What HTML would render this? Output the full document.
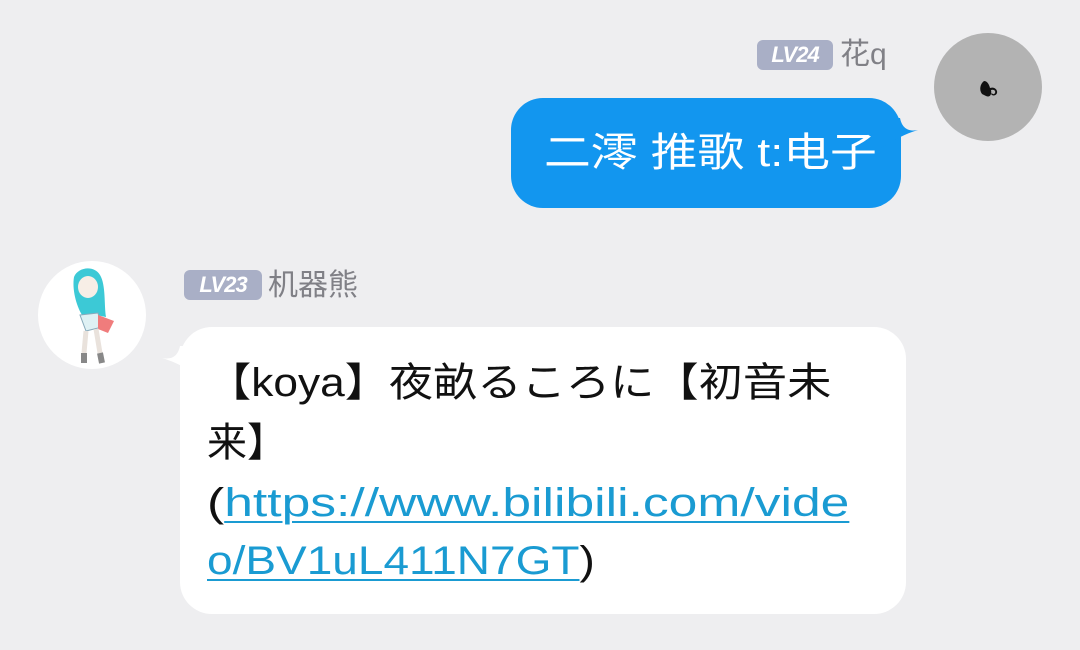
<!DOCTYPE html>
<html><head><meta charset="utf-8"><style>
body{margin:0;width:1080px;height:650px;background:#eeeef0;position:relative;overflow:hidden;font-family:"Liberation Sans","Noto Sans CJK SC",sans-serif;}
.a{position:absolute;}
.badge{background:#a9afc6;color:#fff;font-weight:bold;font-style:italic;font-size:22px;border-radius:6px;height:30px;line-height:30px;text-align:center;letter-spacing:-1px}
.name{color:#808086;font-size:30px;line-height:30px}
.ln{position:absolute;left:207px;font-size:40px;color:#111;white-space:nowrap;line-height:44px;transform-origin:0 50%}
.lk{color:#1a9bd2;text-decoration:underline;text-decoration-thickness:2px;text-underline-offset:5px}
</style></head><body>
<div class="a badge" style="left:757px;top:40px;width:76px">LV24</div>
<div class="a name" style="left:840px;top:40px">花q</div>
<div class="a" style="left:934px;top:33px;width:108px;height:108px;border-radius:50%;background:#b3b3b3"></div>
<svg class="a" style="left:976px;top:76px" width="26" height="26" viewBox="0 0 26 26"><path d="M8 5 C4 8 3 14 6 18 L10 20 C14 22 16 18 15 14 C18 13 20 15 19 17 C18 19 16 18 16 17 L15 18 C17 21 22 19 21 15 C20 12 17 11 14 12 C13 8 11 5 8 5Z" fill="#111"/></svg>
<div class="a" style="left:511px;top:98px;width:390px;height:110px;border-radius:32px;background:#1296ef"></div>
<svg class="a" style="left:880px;top:118px" width="40" height="40" viewBox="0 0 40 40"><path d="M0 0 L0 30 C10 26 18 18 38 12 C28 14 22 10 20 0Z" fill="#1296ef"/></svg>
<div class="a" style="left:544px;top:131px;color:#fff;font-size:40px;line-height:44px;white-space:nowrap;transform:scaleX(1.17);transform-origin:0 50%">二澪 推歌 t:电子</div>

<div class="a" style="left:38px;top:261px;width:108px;height:108px;border-radius:50%;background:#fff"></div>
<svg class="a" style="left:62px;top:265px" width="64" height="102" viewBox="0 0 64 102">
<path d="M12 12 C16 2 32 0 38 10 C44 20 42 40 44 52 L34 50 L20 50 C14 40 10 24 12 12Z" fill="#3cc9d6"/>
<ellipse cx="26" cy="22" rx="10" ry="11" fill="#f7eee6"/>
<path d="M18 50 L36 48 L40 62 L24 66Z" fill="#dff1f4" stroke="#8ab" stroke-width="1"/>
<path d="M36 50 L52 56 L46 68 L36 64Z" fill="#f07c7c"/>
<path d="M24 66 L22 88 M34 64 L38 88" stroke="#e9e2dc" stroke-width="5"/>
<path d="M22 88 L22 98 M38 88 L40 98" stroke="#888" stroke-width="6"/>
</svg>
<div class="a badge" style="left:184px;top:270px;width:78px">LV23</div>
<div class="a name" style="left:268px;top:271px">机器熊</div>
<div class="a" style="left:180px;top:327px;width:726px;height:287px;border-radius:32px;background:#fff"></div>
<svg class="a" style="left:160px;top:346px" width="40" height="40" viewBox="0 0 40 40"><path d="M40 0 L40 30 C30 26 22 18 2 12 C12 14 18 10 20 0Z" fill="#fff"/></svg>
<div class="ln" style="top:361px;transform:scaleX(1.106)">【koya】夜畝るころに【初音未</div>
<div class="ln" style="top:421px">来】</div>
<div class="ln" style="top:481px;transform:scaleX(1.29)">(<span class="lk">https://www.bilibili.com/vide</span></div>
<div class="ln" style="top:539px;transform:scaleX(1.15)"><span class="lk">o/BV1uL411N7GT</span>)</div>
</body></html>
